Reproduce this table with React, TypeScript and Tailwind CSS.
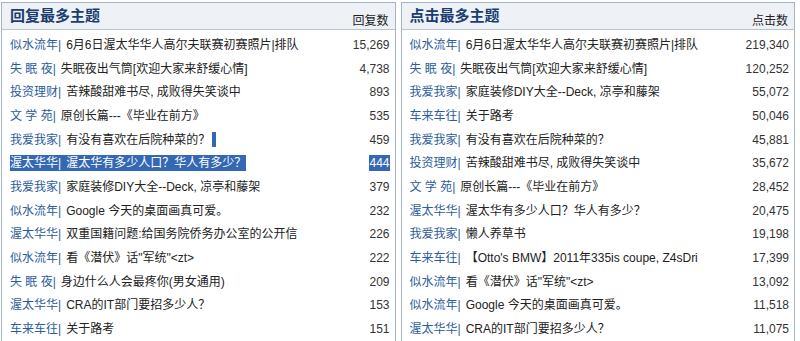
import React from 'react';

type Row = { cat: string; title: string; count: string; sel?: boolean; caret?: boolean };

const replies: Row[] = [
  { cat: '似水流年', title: '6月6日渥太华华人高尔夫联赛初赛照片|排队', count: '15,269' },
  { cat: '失 眠 夜', title: '失眠夜出气筒[欢迎大家来舒缓心情]', count: '4,738' },
  { cat: '投资理财', title: '苦辣酸甜难书尽, 成败得失笑谈中', count: '893' },
  { cat: '文 学 苑', title: '原创长篇---《毕业在前方》', count: '535' },
  { cat: '我爱我家', title: '有没有喜欢在后院种菜的？', count: '459', caret: true },
  { cat: '渥太华华', title: '渥太华有多少人口？华人有多少？', count: '444', sel: true },
  { cat: '我爱我家', title: '家庭装修DIY大全--Deck, 凉亭和藤架', count: '379' },
  { cat: '似水流年', title: 'Google 今天的桌面画真可爱。', count: '232' },
  { cat: '渥太华华', title: '双重国籍问题:给国务院侨务办公室的公开信', count: '226' },
  { cat: '似水流年', title: '看《潜伏》话"军统"<zt>', count: '222' },
  { cat: '失 眠 夜', title: '身边什么人会最疼你(男女通用)', count: '209' },
  { cat: '渥太华华', title: 'CRA的IT部门要招多少人？', count: '153' },
  { cat: '车来车往', title: '关于路考', count: '151' },
];

const clicks: Row[] = [
  { cat: '似水流年', title: '6月6日渥太华华人高尔夫联赛初赛照片|排队', count: '219,340' },
  { cat: '失 眠 夜', title: '失眠夜出气筒[欢迎大家来舒缓心情]', count: '120,252' },
  { cat: '我爱我家', title: '家庭装修DIY大全--Deck, 凉亭和藤架', count: '55,072' },
  { cat: '车来车往', title: '关于路考', count: '50,046' },
  { cat: '我爱我家', title: '有没有喜欢在后院种菜的？', count: '45,881' },
  { cat: '投资理财', title: '苦辣酸甜难书尽, 成败得失笑谈中', count: '35,672' },
  { cat: '文 学 苑', title: '原创长篇---《毕业在前方》', count: '28,452' },
  { cat: '渥太华华', title: '渥太华有多少人口？华人有多少？', count: '20,475' },
  { cat: '我爱我家', title: '懒人养草书', count: '19,198' },
  { cat: '车来车往', title: "【Otto's BMW】2011年335is coupe, Z4sDri", count: '17,399' },
  { cat: '似水流年', title: '看《潜伏》话"军统"<zt>', count: '13,092' },
  { cat: '似水流年', title: 'Google 今天的桌面画真可爱。', count: '11,518' },
  { cat: '渥太华华', title: 'CRA的IT部门要招多少人？', count: '11,075' },
];

function Panel({ heading, unit, rows }: { heading: string; unit: string; rows: Row[] }) {
  return (
    <div className="flex-1 border-l border-t border-r border-[#a3b4c7] bg-white">
      <div className="flex items-end justify-between h-[27px] px-[8px] pr-[6px] bg-[#eef2f7] border-b border-[#b7c4d3]">
        <span className="text-[15px] leading-[18px] font-bold text-[#1b3d70] mb-[4px]">{heading}</span>
        <span className="text-[12px] leading-[14px] text-[#222] mb-[1px]">{unit}</span>
      </div>
      <div className="pt-[3px]">
        {rows.map((r, i) => (
          <div key={i} className="flex items-center justify-between h-[23.7px] pl-[8px] pr-[5px] text-[12px] leading-[16px]">
            <div className={`flex items-center whitespace-nowrap ${r.sel ? 'bg-[#3468b4]' : ''}`}>
              <span className={r.sel ? 'text-white' : 'text-[#2b5c9c]'}>{r.cat}|</span>
              <span className={`ml-[5px] ${r.sel ? 'text-white' : 'text-[#222]'}`}>{r.title}</span>
              {r.caret && <span className="ml-[2px] w-[4px] h-[15px] bg-[#3468b4]" />}
            </div>
            <span className={r.sel ? 'bg-[#3468b4] text-white' : 'text-[#333]'}>{r.count}</span>
          </div>
        ))}
      </div>
    </div>
  );
}

export default function App() {
  return (
    <div
      className="w-[800px] h-[341px] overflow-hidden bg-white flex gap-[5px] pt-[2px] pl-[1px] pr-[5px]"
      style={{ fontFamily: '"Liberation Sans", "Noto Sans CJK SC", sans-serif' }}
    >
      <Panel heading="回复最多主题" unit="回复数" rows={replies} />
      <Panel heading="点击最多主题" unit="点击数" rows={clicks} />
    </div>
  );
}
